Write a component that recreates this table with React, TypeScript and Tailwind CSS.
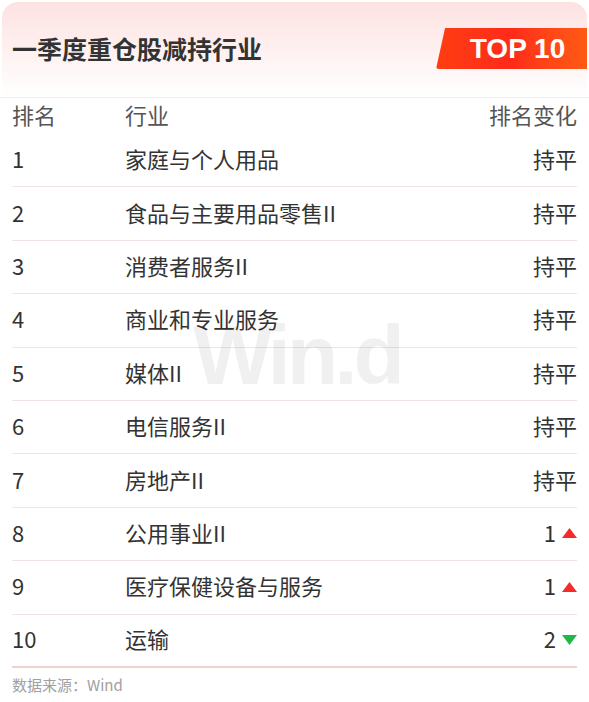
const ROWS = [
  { rank: "1", name: "家庭与个人用品", change: "持平" },
  { rank: "2", name: "食品与主要用品零售II", change: "持平" },
  { rank: "3", name: "消费者服务II", change: "持平" },
  { rank: "4", name: "商业和专业服务", change: "持平" },
  { rank: "5", name: "媒体II", change: "持平" },
  { rank: "6", name: "电信服务II", change: "持平" },
  { rank: "7", name: "房地产II", change: "持平" },
  { rank: "8", name: "公用事业II", change: "1", dir: "up" },
  { rank: "9", name: "医疗保健设备与服务", change: "1", dir: "up" },
  { rank: "10", name: "运输", change: "2", dir: "down" },
];

const font = "font-['Noto_Sans_CJK_SC','Noto_Sans',sans-serif]";

function Change({ change, dir }: { change: string; dir?: string }) {
  return (
    <div className="flex items-center gap-[6px]">
      <span>{change}</span>
      {dir === "up" && (
        <svg width="15" height="10" viewBox="0 0 15 10" className="mt-[2px]">
          <polygon points="7.5,0 15,10 0,10" fill="#f52a2a" />
        </svg>
      )}
      {dir === "down" && (
        <svg width="15" height="10" viewBox="0 0 15 10" className="mt-[2px]">
          <polygon points="0,0 15,0 7.5,10" fill="#1fb84b" />
        </svg>
      )}
    </div>
  );
}

export default function App() {
  return (
    <div className={`relative h-[702px] w-[589px] overflow-hidden bg-white ${font}`}>
      <div className="mx-[2px] mt-[2px] flex h-[95px] items-center justify-between rounded-t-[16px] bg-gradient-to-b from-[#fde2e2] to-white">
        <h1 className="pl-[10px] pb-[2px] text-[25px] font-bold text-[#333]">一季度重仓股减持行业</h1>
        <div className="mb-[2px] flex h-[41px] w-[151px] items-center justify-center rounded-bl-[3px] bg-gradient-to-r from-[#ff3d12] via-[#fe2a1a] to-[#ff5a14] pl-[12px] font-['Liberation_Sans',sans-serif] text-[28px] font-bold text-white [clip-path:polygon(6%_0,100%_0,100%_100%,0_100%)]">
          TOP 10
        </div>
      </div>
      <div className="h-px bg-[#f6eded]" />
      <div className="px-[12px]">
        <div className="flex h-[36px] items-center pb-[3px] text-[22px] text-[#555]">
          <div className="w-[113px]">排名</div>
          <div className="flex-1">行业</div>
          <div>排名变化</div>
        </div>
        {ROWS.map((r, i) => (
          <div
            key={r.rank}
            className={`flex h-[53.4px] items-center pb-[3px] text-[22px] text-[#333] ${
              i === ROWS.length - 1 ? "border-b-2 border-[#f2d0d0]" : "border-b border-[#f2e2e4]"
            }`}
          >
            <div className="w-[113px]">{r.rank}</div>
            <div className="flex-1">{r.name}</div>
            <Change change={r.change} dir={r.dir} />
          </div>
        ))}
        <div className="flex h-[34px] items-center text-[15px] text-[#a0a0a0]">数据来源：Wind</div>
      </div>
      <div className="pointer-events-none absolute left-[193px] top-[292px] font-['Liberation_Sans',sans-serif] text-[84px] font-bold tracking-[-4px] text-[#000]/[0.06]">
        Win.d
      </div>
    </div>
  );
}
